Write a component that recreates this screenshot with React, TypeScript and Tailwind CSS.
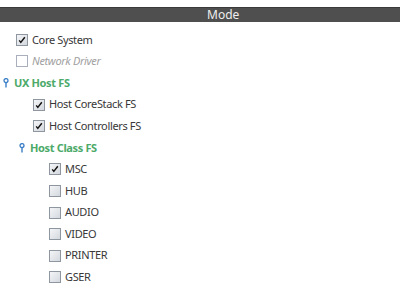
import type { ReactNode } from "react"

const font = { fontFamily: '"Noto Sans", "Open Sans", sans-serif' }

function Box({ checked, disabled }: { checked?: boolean; disabled?: boolean }) {
  if (disabled) {
    return <span className="inline-block w-[12px] h-[12px] border border-[#a9b0bb] bg-white shrink-0" />
  }
  return (
    <span className="relative inline-block w-[12px] h-[12px] border border-[#8e969f] bg-gradient-to-br from-[#f4f5f7] to-[#d4d8de] shrink-0">
      {checked && (
        <svg viewBox="0 0 10 10" className="absolute left-[1px] top-[1px] w-[8px] h-[8px]">
          <path d="M1.5 5.5 L3.5 8 L8.5 1.5" fill="none" stroke="#111" strokeWidth="1.8" />
        </svg>
      )}
    </span>
  )
}

function Pin() {
  return (
    <svg viewBox="0 0 6 10" className="w-[6px] h-[10px] shrink-0">
      <circle cx="3" cy="2.6" r="2" fill="none" stroke="#3b7fc6" strokeWidth="1.3" />
      <path d="M3 4.6 V9.5" stroke="#3b7fc6" strokeWidth="1.4" />
    </svg>
  )
}

function Row({ indent, children }: { indent: string; children: ReactNode }) {
  return <div className={`flex items-center gap-[4px] h-[21.6px] ${indent}`}>{children}</div>
}

function Item({ label, indent, checked }: { label: string; indent: string; checked?: boolean }) {
  return (
    <Row indent={indent}>
      <Box checked={checked} />
      <span className="text-[#383838]">{label}</span>
    </Row>
  )
}

function Group({ label, indent }: { label: string; indent: string }) {
  return (
    <Row indent={indent}>
      <Pin />
      <span className="font-bold text-[#4caa6a] ml-[1px]">{label}</span>
    </Row>
  )
}

export default function App() {
  return (
    <div className="w-[400px] h-[291px] bg-white overflow-hidden text-[11px] tracking-[-0.35px]" style={font}>
      <div className="h-[7px]" />
      <div className="h-[15px] bg-[#4f4f4f] border-t border-[#3a3a3a] flex items-center">
        <span className="text-[#eeeeee] text-[12px] tracking-normal leading-none pl-[207px]">Mode</span>
      </div>
      <div className="pt-[7px]">
        <Item label="Core System" indent="pl-[16px]" checked />
        <Row indent="pl-[16px]">
          <Box disabled />
          <span className="italic text-[#a0a0a0]">Network Driver</span>
        </Row>
        <Group label="UX Host FS" indent="pl-[3px]" />
        <Item label="Host CoreStack FS" indent="pl-[33px]" checked />
        <Item label="Host Controllers FS" indent="pl-[33px]" checked />
        <Group label="Host Class FS" indent="pl-[19px]" />
        <Item label="MSC" indent="pl-[49px]" checked />
        <Item label="HUB" indent="pl-[49px]" />
        <Item label="AUDIO" indent="pl-[49px]" />
        <Item label="VIDEO" indent="pl-[49px]" />
        <Item label="PRINTER" indent="pl-[49px]" />
        <Item label="GSER" indent="pl-[49px]" />
      </div>
    </div>
  )
}
